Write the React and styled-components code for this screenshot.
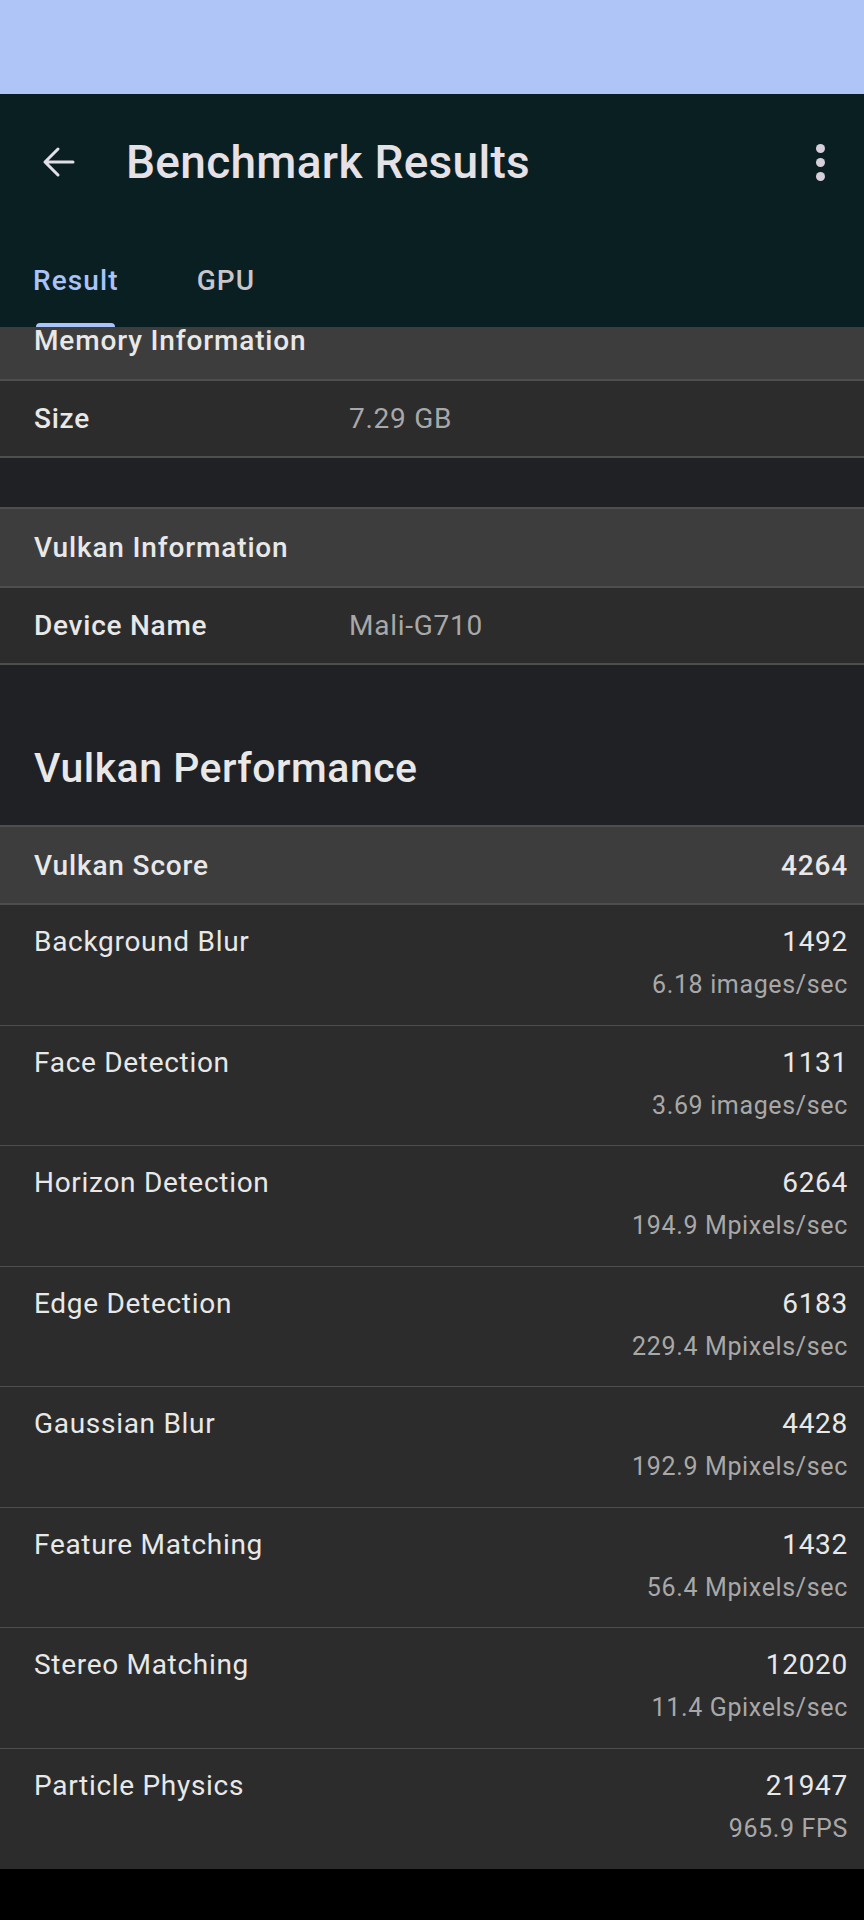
import React from "react";
import styled, { createGlobalStyle } from "styled-components";

const GlobalStyle = createGlobalStyle`
  html, body {
    margin: 0;
    padding: 0;
    background: #000;
  }
  body {
    font-family: Roboto, "Noto Sans", "Liberation Sans", sans-serif;
    -webkit-font-smoothing: antialiased;
  }
`;

const memoryRows = [{ label: "Size", value: "7.29 GB" }];
const vulkanRows = [{ label: "Device Name", value: "Mali-G710" }];

const benchmarks = [
  { name: "Background Blur", score: 1492, rate: "6.18 images/sec" },
  { name: "Face Detection", score: 1131, rate: "3.69 images/sec" },
  { name: "Horizon Detection", score: 6264, rate: "194.9 Mpixels/sec" },
  { name: "Edge Detection", score: 6183, rate: "229.4 Mpixels/sec" },
  { name: "Gaussian Blur", score: 4428, rate: "192.9 Mpixels/sec" },
  { name: "Feature Matching", score: 1432, rate: "56.4 Mpixels/sec" },
  { name: "Stereo Matching", score: 12020, rate: "11.4 Gpixels/sec" },
  { name: "Particle Physics", score: 21947, rate: "965.9 FPS" },
];

function App() {
  return (
    <>
      <GlobalStyle />
      <Screen>
        <StatusBar />
        <AppBar>
          <Toolbar>
            <IconButton aria-label="back">
              <svg width="40" height="40" viewBox="0 0 40 40" fill="none">
                <path
                  d="M34 20H6M19 7L6 20l13 13"
                  stroke="#e3dfe6"
                  strokeWidth="3"
                  strokeLinecap="round"
                  strokeLinejoin="round"
                />
              </svg>
            </IconButton>
            <Title>Benchmark Results</Title>
            <Kebab aria-label="more">
              <span />
              <span />
              <span />
            </Kebab>
          </Toolbar>
          <Tabs>
            <Tab active>
              Result
              <Indicator />
            </Tab>
            <Tab>GPU</Tab>
          </Tabs>
        </AppBar>

        <Viewport>
          {/* list is scrolled a little, so the first header sits under the tabs */}
          <Scroller>
            <Table>
              <SectionHeader>Memory Information</SectionHeader>
              {memoryRows.map((r) => (
                <InfoRow key={r.label}>
                  <InfoLabel>{r.label}</InfoLabel>
                  <InfoValue>{r.value}</InfoValue>
                </InfoRow>
              ))}
            </Table>
            <Spacer />
            <Table>
              <SectionHeader>Vulkan Information</SectionHeader>
              {vulkanRows.map((r) => (
                <InfoRow key={r.label}>
                  <InfoLabel>{r.label}</InfoLabel>
                  <InfoValue>{r.value}</InfoValue>
                </InfoRow>
              ))}
            </Table>

            <PerfTitle>Vulkan Performance</PerfTitle>
            <Table>
              <ScoreRow>
                <span>Vulkan Score</span>
                <span>4264</span>
              </ScoreRow>
              {benchmarks.map((b) => (
                <BenchRow key={b.name}>
                  <BenchName>{b.name}</BenchName>
                  <BenchNumbers>
                    <Score>{b.score}</Score>
                    <Rate>{b.rate}</Rate>
                  </BenchNumbers>
                </BenchRow>
              ))}
            </Table>
          </Scroller>
        </Viewport>
        <NavArea />
      </Screen>
    </>
  );
}

const Screen = styled.div`
  width: 864px;
  height: 1920px;
  display: flex;
  flex-direction: column;
  background: #000;
  overflow: hidden;
`;

const StatusBar = styled.div`
  height: 94px;
  flex-shrink: 0;
  background: #afc5f8;
`;

const AppBar = styled.header`
  flex-shrink: 0;
  background: #0a1f22;
  display: flex;
  flex-direction: column;
`;

const Toolbar = styled.div`
  height: 136px;
  display: flex;
  align-items: center;
  padding: 0 24px 0 39px;
`;

const IconButton = styled.div`
  width: 40px;
  height: 40px;
  display: flex;
  align-items: center;
  justify-content: center;
`;

const Title = styled.h1`
  flex: 1;
  margin: 0 0 0 47px;
  color: #e6e1e6;
  font-size: 46px;
  font-weight: 500;
  letter-spacing: 0.3px;
`;

const Kebab = styled.div`
  width: 40px;
  display: flex;
  flex-direction: column;
  align-items: center;
  gap: 5px;
  span {
    width: 9px;
    height: 9px;
    border-radius: 50%;
    background: #d6d0da;
  }
`;

const Tabs = styled.nav`
  height: 97px;
  display: flex;
  align-items: stretch;
  padding-left: 33px;
  gap: 78px;
`;

const Tab = styled.div`
  position: relative;
  display: flex;
  align-items: center;
  padding-top: 4px;
  font-size: 28px;
  font-weight: 500;
  letter-spacing: 1.1px;
  color: ${(p) => (p.active ? "#a9c3fb" : "#c8c5cc")};
`;

const Indicator = styled.span`
  position: absolute;
  left: 3px;
  right: 4px;
  bottom: 0;
  height: 4px;
  border-radius: 4px 4px 0 0;
  background: #a9c3fb;
`;

const Viewport = styled.main`
  height: 1542px;
  flex-shrink: 0;
  overflow: hidden;
  background: #202124;
`;

const Scroller = styled.div`
  margin-top: -27px;
  display: flex;
  flex-direction: column;
`;

const Table = styled.section`
  display: flex;
  flex-direction: column;
  border-top: 2px solid #4e4e4e;
  background: #2c2c2c;
`;

const SectionHeader = styled.div`
  height: 77px;
  display: flex;
  align-items: center;
  padding: 0 34px;
  background: #3d3d3d;
  border-bottom: 2px solid #4e4e4e;
  color: #e8e8e8;
  font-size: 28px;
  font-weight: 500;
  letter-spacing: 0.85px;
`;

const InfoRow = styled.div`
  height: 75px;
  display: flex;
  align-items: center;
  padding: 0 34px;
  border-bottom: 2px solid #4e4e4e;
  font-size: 28px;
  letter-spacing: 0.75px;
`;

const InfoLabel = styled.span`
  width: 315px;
  color: #e8e8e8;
  font-weight: 500;
`;

const InfoValue = styled.span`
  color: #a8a8a8;
`;

const Spacer = styled.div`
  height: 49px;
`;

const PerfTitle = styled.h2`
  height: 160px;
  margin: 0;
  box-sizing: border-box;
  display: flex;
  align-items: flex-end;
  padding: 0 34px 33px;
  color: #e8e8e8;
  font-size: 41px;
  font-weight: 500;
  letter-spacing: 0.5px;
`;

const ScoreRow = styled.div`
  height: 76px;
  display: flex;
  align-items: center;
  justify-content: space-between;
  padding: 0 16px 0 34px;
  background: #3d3d3d;
  border-bottom: 2px solid #4e4e4e;
  color: #e8e8e8;
  font-size: 28px;
  font-weight: 500;
  letter-spacing: 0.85px;
`;

const BenchRow = styled.div`
  display: flex;
  justify-content: space-between;
  padding: 19px 16px 0 34px;
  box-sizing: border-box;
  height: 120.5px;
  border-bottom: 1px solid #4e4e4e;
  font-size: 28px;
  letter-spacing: 0.7px;
  &:last-child {
    border-bottom: none;
  }
`;

const BenchName = styled.span`
  line-height: 36px;
  color: #e8e8e8;
`;

const BenchNumbers = styled.div`
  display: flex;
  flex-direction: column;
  align-items: flex-end;
`;

const Score = styled.span`
  line-height: 36px;
  color: #e8e8e8;
`;

const Rate = styled.span`
  margin-top: 7px;
  line-height: 36px;
  color: #a8a8a8;
  font-size: 25px;
  letter-spacing: 0.65px;
`;

const NavArea = styled.div`
  flex: 1;
  background: #000;
`;

export default App;
